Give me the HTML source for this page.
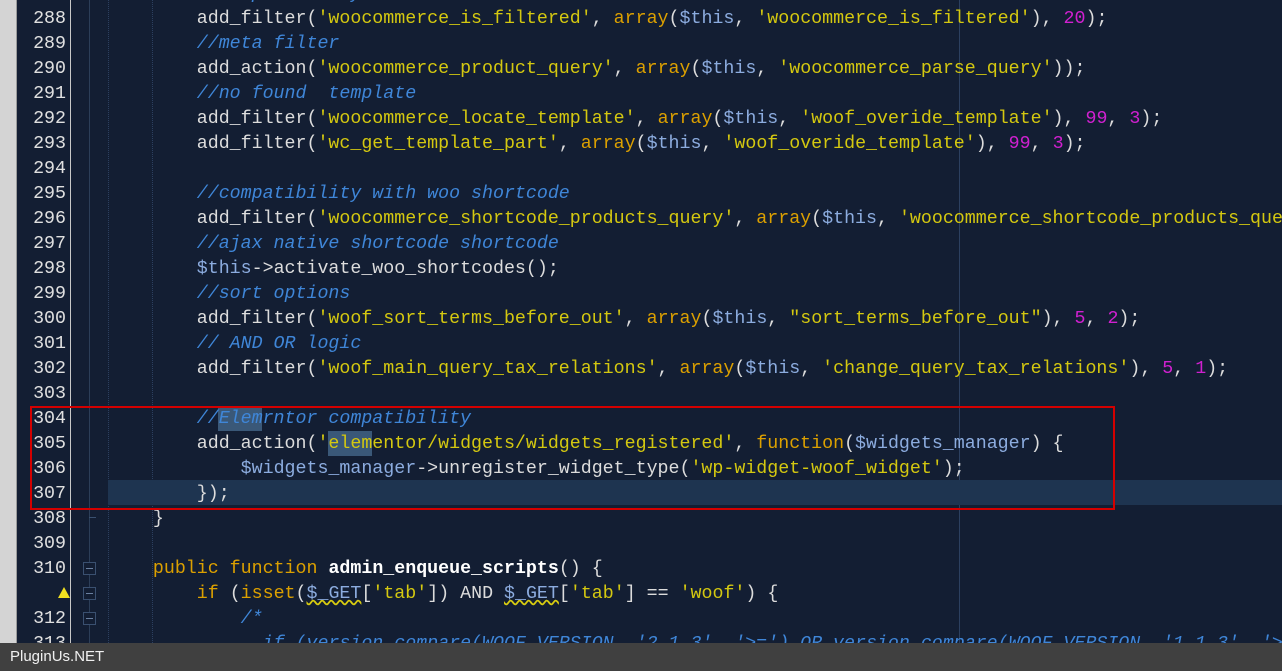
<!DOCTYPE html>
<html><head><meta charset="utf-8"><style>
body{margin:0;width:1282px;height:671px;overflow:hidden;background:#131e33;position:relative;font-family:"Liberation Mono","Courier New",monospace;font-size:18.3px}
.l{position:absolute;left:0;width:1282px;height:25px;line-height:26px}
.n{position:absolute;left:17px;width:49px;text-align:right;color:#e0e0e0}
.c{position:absolute;left:109px;white-space:pre;color:#dcdcdc}
.s{color:#d4c810}.k{color:#dca000}.v{color:#8cacdf}.m{color:#d020d0}.cm{color:#3f86d8;font-style:italic}.b{font-weight:bold;color:#fff}
</style></head><body>
<div style="position:absolute;left:0;top:0;width:16px;height:671px;background:#d4d4d4"></div>
<div style="position:absolute;left:16px;top:0;width:1px;height:671px;background:#9a9a9a"></div>
<div style="position:absolute;left:70px;top:0;width:1px;height:671px;background:#c8c8c8"></div>
<div style="position:absolute;left:89px;top:0;width:1px;height:671px;background:#2c3e58"></div>
<div style="position:absolute;left:959px;top:0;width:1px;height:671px;background:#2c4060"></div>
<div style="position:absolute;left:108px;top:0;height:671px;border-left:1px dotted #2c4060"></div>
<div style="position:absolute;left:152px;top:0;height:671px;border-left:1px dotted #2c4060"></div>
<div style="position:absolute;left:108px;top:480px;width:1174px;height:25px;background:#1e3450"></div>
<div style="position:absolute;left:218px;top:406px;width:44px;height:25px;background:#3a5878"></div>
<div style="position:absolute;left:328px;top:431px;width:44px;height:25px;background:#3a5878"></div>
<div class="l" style="top:-19px"><div class="c">        <span class="cm">//compatibility with woo</span></div></div>
<div class="l" style="top:6px"><div class="n">288</div><div class="c">        add_filter(<span class="s">'woocommerce_is_filtered'</span>, <span class="k">array</span>(<span class="v">$this</span>, <span class="s">'woocommerce_is_filtered'</span>), <span class="m">20</span>);</div></div>
<div class="l" style="top:31px"><div class="n">289</div><div class="c">        <span class="cm">//meta filter</span></div></div>
<div class="l" style="top:56px"><div class="n">290</div><div class="c">        add_action(<span class="s">'woocommerce_product_query'</span>, <span class="k">array</span>(<span class="v">$this</span>, <span class="s">'woocommerce_parse_query'</span>));</div></div>
<div class="l" style="top:81px"><div class="n">291</div><div class="c">        <span class="cm">//no found  template</span></div></div>
<div class="l" style="top:106px"><div class="n">292</div><div class="c">        add_filter(<span class="s">'woocommerce_locate_template'</span>, <span class="k">array</span>(<span class="v">$this</span>, <span class="s">'woof_overide_template'</span>), <span class="m">99</span>, <span class="m">3</span>);</div></div>
<div class="l" style="top:131px"><div class="n">293</div><div class="c">        add_filter(<span class="s">'wc_get_template_part'</span>, <span class="k">array</span>(<span class="v">$this</span>, <span class="s">'woof_overide_template'</span>), <span class="m">99</span>, <span class="m">3</span>);</div></div>
<div class="l" style="top:156px"><div class="n">294</div></div>
<div class="l" style="top:181px"><div class="n">295</div><div class="c">        <span class="cm">//compatibility with woo shortcode</span></div></div>
<div class="l" style="top:206px"><div class="n">296</div><div class="c">        add_filter(<span class="s">'woocommerce_shortcode_products_query'</span>, <span class="k">array</span>(<span class="v">$this</span>, <span class="s">'woocommerce_shortcode_products_query'</span></div></div>
<div class="l" style="top:231px"><div class="n">297</div><div class="c">        <span class="cm">//ajax native shortcode shortcode</span></div></div>
<div class="l" style="top:256px"><div class="n">298</div><div class="c">        <span class="v">$this</span>-&gt;activate_woo_shortcodes();</div></div>
<div class="l" style="top:281px"><div class="n">299</div><div class="c">        <span class="cm">//sort options</span></div></div>
<div class="l" style="top:306px"><div class="n">300</div><div class="c">        add_filter(<span class="s">'woof_sort_terms_before_out'</span>, <span class="k">array</span>(<span class="v">$this</span>, <span class="s">"sort_terms_before_out"</span>), <span class="m">5</span>, <span class="m">2</span>);</div></div>
<div class="l" style="top:331px"><div class="n">301</div><div class="c">        <span class="cm">// AND OR logic</span></div></div>
<div class="l" style="top:356px"><div class="n">302</div><div class="c">        add_filter(<span class="s">'woof_main_query_tax_relations'</span>, <span class="k">array</span>(<span class="v">$this</span>, <span class="s">'change_query_tax_relations'</span>), <span class="m">5</span>, <span class="m">1</span>);</div></div>
<div class="l" style="top:381px"><div class="n">303</div></div>
<div class="l" style="top:406px"><div class="n">304</div><div class="c">        <span class="cm">//Elemrntor compatibility</span></div></div>
<div class="l" style="top:431px"><div class="n">305</div><div class="c">        add_action(<span class="s">'elementor/widgets/widgets_registered'</span>, <span class="k">function</span>(<span class="v">$widgets_manager</span>) {</div></div>
<div class="l" style="top:456px"><div class="n">306</div><div class="c">            <span class="v">$widgets_manager</span>-&gt;unregister_widget_type(<span class="s">'wp-widget-woof_widget'</span>);</div></div>
<div class="l" style="top:481px"><div class="n">307</div><div class="c">        });</div></div>
<div class="l" style="top:506px"><div class="n">308</div><div class="c">    }</div></div>
<div class="l" style="top:531px"><div class="n">309</div></div>
<div class="l" style="top:556px"><div class="n">310</div><div class="c">    <span class="k">public function</span> <span class="b">admin_enqueue_scripts</span>() {</div></div>
<div class="l" style="top:581px"><div class="c">        <span class="k">if</span> (<span class="k">isset</span>(<span class="v" style="text-decoration:underline wavy #d8cc10">$_GET</span>[<span class="s">'tab'</span>]) AND <span class="v" style="text-decoration:underline wavy #d8cc10">$_GET</span>[<span class="s">'tab'</span>] == <span class="s">'woof'</span>) {</div></div>
<div class="l" style="top:606px"><div class="n">312</div><div class="c">            <span class="cm">/*</span></div></div>
<div class="l" style="top:631px"><div class="n">313</div><div class="c">              <span class="cm">if (version_compare(WOOF_VERSION, '2.1.3', '&gt;=') OR version_compare(WOOF_VERSION, '1.1.3', '&gt;</span></div></div>
<div style="position:absolute;left:58px;top:587px;width:0;height:0;border-left:6px solid transparent;border-right:6px solid transparent;border-bottom:11px solid #f0e020"></div>
<div style="position:absolute;left:83px;top:562px;width:11px;height:11px;border:1px solid #3a5070;background:#131e33"><div style="margin:5px 2px 0;height:1px;background:#6a80a0"></div></div>
<div style="position:absolute;left:83px;top:587px;width:11px;height:11px;border:1px solid #3a5070;background:#131e33"><div style="margin:5px 2px 0;height:1px;background:#6a80a0"></div></div>
<div style="position:absolute;left:83px;top:612px;width:11px;height:11px;border:1px solid #3a5070;background:#131e33"><div style="margin:5px 2px 0;height:1px;background:#6a80a0"></div></div>
<div style="position:absolute;left:89px;top:517px;width:7px;height:1px;background:#3a5070"></div>
<div style="position:absolute;left:30px;top:406px;width:1081px;height:100px;border:2px solid #d40000"></div>
<div style="position:absolute;left:0;top:643px;width:1282px;height:28px;background:#404040;color:#f0f0f0;font-family:'Liberation Sans',sans-serif;font-size:15px;line-height:28px;padding-left:10px;box-sizing:border-box">PluginUs.NET</div>
</body></html>
